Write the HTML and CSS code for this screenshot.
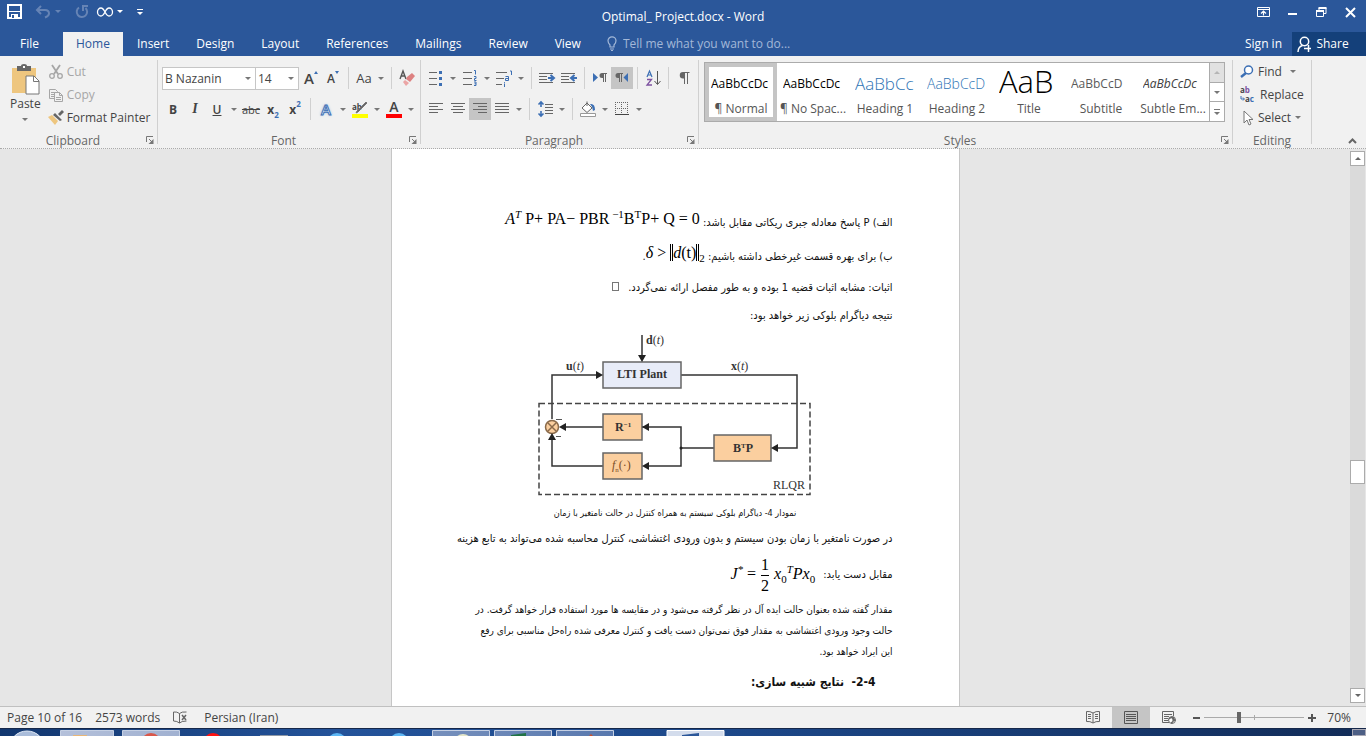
FILE: index.html
```html
<!DOCTYPE html>
<html lang="en">
  <head>
    <meta charset="UTF-8" />
    <meta name="viewport" content="width=device-width, initial-scale=1.0" />
    <title>Optimal_ Project.docx - Word</title>
    <link rel="stylesheet" href="styles.css">
  </head>
  <body>
    <!-- Title bar -->
    <header class="titlebar">
      <div class="quick">
        <button class="quick-btn" aria-label="Save">
          <svg width="15" height="15" viewBox="0 0 15 15"><path d="M1 1h13v13H1z" fill="none" stroke="#fff" stroke-width="2"/><path d="M2 7h11v1H2zM4 10h7v4H4z" fill="#fff"/><path d="M5 11h2v3H5z" fill="#2b579a"/></svg>
        </button>
        <button class="quick-btn undo dim" aria-label="Undo">
          <svg width="15" height="13" viewBox="0 0 15 13"><path d="M5 1 1 5l4 4M1.500 5H9q4 0 4 3.500Q13 11 9 12.500" fill="none" stroke="currentColor" stroke-width="2"/></svg>
          <i class="caret"></i>
        </button>
        <button class="quick-btn dim" aria-label="Repeat">
          <svg width="14" height="14" viewBox="0 0 14 14"><path d="M4 2.500A5.200 5.200 0 1 0 10.500 3M8 6V1h5" fill="none" stroke="currentColor" stroke-width="2"/></svg>
        </button>
        <button class="quick-btn" aria-label="Infinity">
          <svg width="16" height="10" viewBox="0 0 16 10"><path d="M8 5C6 1 5 1 4 1a3.500 4 0 0 0 0 8c2 0 3-2 4-4s2-4 4-4a3.500 4 0 0 1 0 8C10 9 9 7 8 5z" fill="none" stroke="#fff" stroke-width="1.300"/></svg>
          <i class="caret"></i>
        </button>
        <button class="quick-btn more" aria-label="Customize toolbar">
          <i class="bar"></i><i class="caret"></i>
        </button>
      </div>
      <h1 class="doc-title">Optimal_ Project.docx - Word</h1>
      <div class="window-btns">
        <button aria-label="Ribbon display options">
          <svg width="13" height="10" viewBox="0 0 13 10"><path d="M.5.5h12v9H.5zM0 2.500h13" fill="none" stroke="#fff"/><path d="M6.500 8.500V4M4 6.500 6.500 4 9 6.500" fill="none" stroke="#fff" stroke-width="1.200"/></svg>
        </button>
        <button aria-label="Minimize">
          <svg width="10" height="10" viewBox="0 0 10 10"><path d="M0 6h9v2H0z" fill="#fff"/></svg>
        </button>
        <button aria-label="Restore">
          <svg width="11" height="10" viewBox="0 0 11 10"><path d="M.5 4h7v5.500h-7zM3 3.500V1h7v5.500H8" fill="none" stroke="#fff"/><path d="M0 3h8v2H0zM2.500 0h8v2h-8z" fill="#fff"/></svg>
        </button>
        <button aria-label="Close">
          <svg width="11" height="11" viewBox="0 0 11 11"><path d="m1 1 9 9M10 1l-9 9" stroke="#fff" stroke-width="2"/></svg>
        </button>
      </div>
    </header>

    <!-- Ribbon tabs -->
    <nav class="tabs">
      <a class="tab file" href="#">File</a>
      <a class="tab active" href="#">Home</a>
      <a class="tab" href="#">Insert</a>
      <a class="tab" href="#">Design</a>
      <a class="tab" href="#">Layout</a>
      <a class="tab" href="#">References</a>
      <a class="tab" href="#">Mailings</a>
      <a class="tab" href="#">Review</a>
      <a class="tab" href="#">View</a>
      <label class="tell" for="tellMe" aria-label="Tell me">
        <svg width="10" height="15" viewBox="0 0 10 15"><path d="M3 11V9Q1 7 1 4.800a4 4 0 0 1 8 0Q9 7 7 9v2zM3 13h4M4 14.500h2" fill="none" stroke="#a3b8d8" stroke-width="1.200"/></svg>
      </label>
      <input class="tell-input" id="tellMe" type="text" placeholder="Tell me what you want to do..." />
      <a class="signin" href="#">Sign in</a>
      <button class="share">
        <svg width="15" height="17" viewBox="0 0 15 17"><circle cx="7.500" cy="5.500" r="4.200" fill="none" stroke="#fff" stroke-width="1.500"/><path d="M1 16q0-5 4.500-6.500M7 12.500h7M11.500 9v7" fill="none" stroke="#fff" stroke-width="1.500"/></svg>
        Share
      </button>
    </nav>

    <!-- Ribbon -->
    <section class="ribbon">
      <div class="group clipboard">
        <div class="group-body clip-body">
          <button class="paste">
            <svg width="29" height="31" viewBox="0 0 29 31"><path d="M1 4h24v25H1z" fill="#eec67f"/><path d="M6 2h4q0-2 3-2t3 2h4v5H6z" fill="#666"/><path d="M12 2h2v2h-2z" fill="#fff"/><path d="M15 12h8l5 5v13H15z" fill="#fff" stroke="#777"/><path d="M22.500 12v5.500H28" fill="none" stroke="#777"/></svg>
            <span>Paste</span>
            <i class="caret"></i>
          </button>
          <div class="clip-list">
            <button class="cmd off">
              <svg width="16" height="16" viewBox="0 0 16 16"><path d="m4 1 6 9M12 1l-6 9" stroke="#a6a6a6" stroke-width="1.800"/><circle cx="4" cy="12" r="2.300" fill="none" stroke="#a6a6a6" stroke-width="1.300"/><circle cx="12" cy="12" r="2.300" fill="none" stroke="#a6a6a6" stroke-width="1.300"/></svg>
              Cut
            </button>
            <button class="cmd off">
              <svg width="16" height="16" viewBox="0 0 16 16"><path d="M1.500 2.500h6l2 2v7h-8zM3 5.500h4M3 7.500h4M3 9.500h4" fill="none" stroke="#a6a6a6"/><path d="M6.500 5.500h5l3 3v6h-8z" fill="#f1f1f1" stroke="#a6a6a6"/><path d="M11.500 5.500v3h3M8 10.500h5M8 12.500h5" fill="none" stroke="#a6a6a6"/></svg>
              Copy
            </button>
            <button class="cmd">
              <svg width="16" height="16" viewBox="0 0 16 16"><path d="m0 7 4-2 6 6-3 4z" fill="#eec67f"/><path d="m5 5 2-2 7 7-2 1zM10 4l4-4 2 2-4 4z" fill="#666"/></svg>
              Format Painter
            </button>
          </div>
        </div>
        <div class="group-foot"><span>Clipboard</span><button class="launch" aria-label="Clipboard options"><svg width="8" height="8" viewBox="0 0 8 8"><path d="M.5 6V.5H7M3 3l3 3" fill="none" stroke="#777"/><path d="M7.500 3v5h-5z" fill="#777"/></svg></button></div>
      </div>

      <div class="group font">
        <div class="group-body">
          <div class="tool-row">
            <div class="combo">
              <select class="font-name" aria-label="Font"><option>B Nazanin</option></select>
              <i class="caret"></i>
            </div>
            <div class="combo">
              <select class="font-size" aria-label="Font size"><option>14</option></select>
              <i class="caret"></i>
            </div>
            <button class="tool" aria-label="Grow font"><span class="grow">A</span><i class="tri up"></i></button>
            <button class="tool" aria-label="Shrink font"><span class="shrink">A</span><i class="tri down"></i></button>
            <i class="sep"></i>
            <button class="tool case">Aa</button>
            <button class="drop" aria-label="Case options"><i class="caret"></i></button>
            <i class="sep"></i>
            <button class="tool" aria-label="Clear formatting">
              <svg width="16" height="16" viewBox="0 0 16 16"><path d="M1 9 4 1l3 8M2 6h4" fill="none" stroke="#555" stroke-width="1.400"/><path d="m8 7 5-4 3 3-5 6-4-3z" fill="#dd8181"/><path d="m6 10 4 3-3 3-3-4z" fill="#eba5a5"/></svg>
            </button>
          </div>
          <div class="tool-row">
            <button class="tool bold">B</button>
            <button class="tool italic">I</button>
            <button class="tool under">U</button>
            <button class="drop" aria-label="Underline style"><i class="caret"></i></button>
            <button class="tool strike">abc</button>
            <button class="tool script">x<sub>2</sub></button>
            <button class="tool script">x<sup>2</sup></button>
            <i class="sep"></i>
            <button class="tool effect">A</button>
            <button class="drop" aria-label="Text effects"><i class="caret"></i></button>
            <button class="tool swatch mark" aria-label="Highlight">
              <svg width="16" height="12" viewBox="0 0 16 12"><text x="0" y="8" class="mini">ab</text><path d="M15 1 6 10l-2 1 1-2 9-9z" fill="#666" stroke="#777"/></svg>
              <i class="yellow"></i>
            </button>
            <button class="drop" aria-label="Highlight colour"><i class="caret"></i></button>
            <button class="tool swatch"><span>A</span><i class="red"></i></button>
            <button class="drop" aria-label="Font colour"><i class="caret"></i></button>
          </div>
        </div>
        <div class="group-foot"><span>Font</span><button class="launch" aria-label="Font options"><svg width="8" height="8" viewBox="0 0 8 8"><path d="M.5 6V.5H7M3 3l3 3" fill="none" stroke="#777"/><path d="M7.500 3v5h-5z" fill="#777"/></svg></button></div>
      </div>

      <div class="group para">
        <div class="group-body">
          <div class="tool-row">
            <button class="tool" aria-label="Bullets">
              <svg width="16" height="16" viewBox="0 0 16 16"><path d="M1 2.500h8M1 8.500h8M1 14.500h8" stroke="#666"/><path d="M11 1h3v3h-3zM11 7h3v3h-3zM11 13h3v3h-3z" fill="#3c6fb4"/></svg>
            </button>
            <button class="drop" aria-label="Bullet style"><i class="caret"></i></button>
            <button class="tool" aria-label="Numbering">
              <svg width="16" height="16" viewBox="0 0 16 16"><path d="M1 2.500h9M1 8.500h9M1 14.500h9" stroke="#666"/><path d="M12 .5h1.500v4M12 6.500h2v2h-1.500v2h2M12 12h2v3.500h-2M12.500 13.800H14" fill="none" stroke="#3c6fb4"/></svg>
            </button>
            <button class="drop" aria-label="Number style"><i class="caret"></i></button>
            <button class="tool" aria-label="Multilevel list">
              <svg width="17" height="17" viewBox="0 0 17 17"><path d="M0 2.500h11M0 8.500h8M0 14.500h6" stroke="#666"/><path d="M14 1h1.500v4M9.500 6.500h3v4h-3v-2h3M8.500 12v.800M8.500 13.500V17" fill="none" stroke="#3c6fb4"/></svg>
            </button>
            <button class="drop" aria-label="List style"><i class="caret"></i></button>
            <i class="sep"></i>
            <button class="tool" aria-label="Decrease indent">
              <svg width="16" height="12" viewBox="0 0 16 12"><path d="M0 1.500h14M0 4.500h8M0 7.500h8M0 10.500h14" stroke="#666"/><path d="M9 6h5M11.500 3 15 6l-3.500 3" fill="none" stroke="#3c6fb4" stroke-width="2"/></svg>
            </button>
            <button class="tool" aria-label="Increase indent">
              <svg width="16" height="12" viewBox="0 0 16 12"><path d="M0 1.500h14M0 4.500h8M0 7.500h8M0 10.500h14" stroke="#666"/><path d="M16 6h-5M13.500 3 10 6l3.500 3" fill="none" stroke="#3c6fb4" stroke-width="2"/></svg>
            </button>
            <i class="sep"></i>
            <button class="tool" aria-label="Left to right">
              <svg width="14" height="10" viewBox="0 0 14 10"><path d="M0 0v9l5-4.500z" fill="#3c6fb4"/><path d="M9 5a2.500 2.500 0 0 1 0-5h5v1h-1v8h-1V1h-1v8h-1V5z" fill="#666"/></svg>
            </button>
            <button class="tool on" aria-label="Right to left">
              <svg width="14" height="10" viewBox="0 0 14 10"><path d="M13 0v9L8.500 4.500z" fill="#3c6fb4"/><path d="M3 5a2.500 2.500 0 0 1 0-5h5v1H7v8H6V1H5v8H4V5z" fill="#666"/></svg>
            </button>
            <i class="sep"></i>
            <button class="tool" aria-label="Sort">
              <svg width="15" height="16" viewBox="0 0 15 16"><path d="m1 7 2.500-6L6 7M2 5h3" fill="none" stroke="#3c6fb4" stroke-width="1.200"/><path d="M1 9.500h4.500L1 15h5" fill="none" stroke="#7d51a0" stroke-width="1.300"/><path d="M11.500 1v13M8.500 11l3 3.500 3-3.500" fill="none" stroke="#555"/></svg>
            </button>
            <i class="sep"></i>
            <button class="tool" aria-label="Show marks">
              <svg width="11" height="12" viewBox="0 0 11 12"><path d="M4 6.500a3.200 3.200 0 0 1 0-6.500h6.500v1H9v11H8V1H6v11H5V6.500z" fill="#666"/></svg>
            </button>
          </div>
          <div class="tool-row">
            <button class="tool" aria-label="Align left">
              <svg width="14" height="12" viewBox="0 0 14 12"><path d="M0 .5h14M0 3.500h9M0 6.500h14M0 9.500h9" stroke="#666"/></svg>
            </button>
            <button class="tool" aria-label="Center">
              <svg width="14" height="12" viewBox="0 0 14 12"><path d="M0 .5h14M2 3.500h10M0 6.500h14M2 9.500h10" stroke="#666"/></svg>
            </button>
            <button class="tool on" aria-label="Align right">
              <svg width="14" height="12" viewBox="0 0 14 12"><path d="M0 .5h14M5 3.500h9M0 6.500h14M5 9.500h9" stroke="#666"/></svg>
            </button>
            <button class="tool" aria-label="Justify">
              <svg width="14" height="12" viewBox="0 0 14 12"><path d="M0 .5h14M0 3.500h14M0 6.500h14M0 9.500h14" stroke="#666"/></svg>
            </button>
            <button class="drop" aria-label="Justify options"><i class="caret"></i></button>
            <i class="sep"></i>
            <button class="tool" aria-label="Line spacing">
              <svg width="15" height="16" viewBox="0 0 15 16"><path d="M7 3.500h8M7 6.500h8M7 9.500h8M7 12.500h8" stroke="#666"/><path d="M3 1v5M.5 3.500 3 1l2.500 2.500M3 15v-5M.5 12.500 3 15l2.500-2.500" fill="none" stroke="#3c6fb4" stroke-width="1.600"/></svg>
            </button>
            <button class="drop" aria-label="Spacing options"><i class="caret"></i></button>
            <i class="sep"></i>
            <button class="tool" aria-label="Shading">
              <svg width="16" height="16" viewBox="0 0 16 16"><path d="m2 7 5-5 5 5-5 4.500z" fill="#fff" stroke="#666"/><path d="M7 5V.5" stroke="#666"/><path d="M10 3q5-1 5 6l-2 1q0-4-3-7z" fill="#3c6fb4"/><path d="M.5 12.500h15v3H.5z" fill="#fff" stroke="#999"/></svg>
            </button>
            <button class="drop" aria-label="Shading colour"><i class="caret"></i></button>
            <button class="tool" aria-label="Borders">
              <svg width="14" height="14" viewBox="0 0 14 14"><path d="M0 .5h14M0 6.500h14M.5 0v14M6.500 0v14M12.500 0v14" stroke="#666" stroke-dasharray="1 1"/><path d="M0 12.500h14" stroke="#444"/></svg>
            </button>
            <button class="drop" aria-label="Border options"><i class="caret"></i></button>
          </div>
        </div>
        <div class="group-foot"><span>Paragraph</span><button class="launch" aria-label="Paragraph options"><svg width="8" height="8" viewBox="0 0 8 8"><path d="M.5 6V.5H7M3 3l3 3" fill="none" stroke="#777"/><path d="M7.500 3v5h-5z" fill="#777"/></svg></button></div>
      </div>

      <div class="group styles">
        <div class="gallery">
          <button class="style chosen"><span class="sample">AaBbCcDc</span><span>¶ Normal</span></button>
          <button class="style"><span class="sample">AaBbCcDc</span><span>¶ No Spac...</span></button>
          <button class="style"><span class="sample h1">AaBbCc</span><span>Heading 1</span></button>
          <button class="style"><span class="sample h2">AaBbCcD</span><span>Heading 2</span></button>
          <button class="style"><span class="sample title">AaB</span><span>Title</span></button>
          <button class="style"><span class="sample subtitle">AaBbCcD</span><span>Subtitle</span></button>
          <button class="style"><span class="sample subtle">AaBbCcDc</span><span>Subtle Em...</span></button>
          <div class="gallery-nav">
            <button class="nav-off" aria-label="Previous styles"><i class="caret flip"></i></button>
            <button aria-label="Next styles"><i class="caret"></i></button>
            <button aria-label="All styles"><i class="bar"></i><i class="caret"></i></button>
          </div>
        </div>
        <div class="group-foot"><span>Styles</span><button class="launch" aria-label="Styles options"><svg width="8" height="8" viewBox="0 0 8 8"><path d="M.5 6V.5H7M3 3l3 3" fill="none" stroke="#777"/><path d="M7.500 3v5h-5z" fill="#777"/></svg></button></div>
      </div>

      <div class="group editing">
        <div class="group-body edit-body">
          <button class="cmd">
            <svg width="14" height="14" viewBox="0 0 14 14"><circle cx="8.500" cy="5" r="4" fill="#fff" stroke="#3c6fb4" stroke-width="1.500"/><path d="m6 8-5 4" stroke="#3c6fb4" stroke-width="2.500"/></svg>
            Find <i class="caret gap"></i>
          </button>
          <button class="cmd">
            <svg width="16" height="16" viewBox="0 0 16 16"><text x="0" y="6" class="mini">a<tspan fill="#7d51a0">b</tspan></text><text x="5" y="15" class="mini">a<tspan fill="#3c6fb4">c</tspan></text><path d="M1 9v3h3M3 10.500 4.500 12 3 13.500" fill="none" stroke="#3c6fb4"/></svg>
            Replace
          </button>
          <button class="cmd">
            <svg width="14" height="16" viewBox="0 0 14 16"><path d="M4 1v12l3-3 2 5 2-1-2-4.500h4z" fill="#fff" stroke="#777"/></svg>
            Select<i class="caret"></i>
          </button>
        </div>
        <div class="group-foot"><span>Editing</span></div>
      </div>
      <button class="collapse" aria-label="Collapse ribbon">
        <svg width="9" height="6" viewBox="0 0 9 6"><path d="m1 5 3.500-3.500L8 5" fill="none" stroke="#666" stroke-width="2"/></svg>
      </button>
    </section>

    <!-- Document -->
    <main class="workspace">
      <div class="canvas">
        <article class="page" lang="fa" dir="rtl">
          <p class="line tall">الف) P پاسخ معادله جبری ریکاتی مقابل باشد: <span class="math" dir="ltr"><i>A<sup>T</sup></i> P+ PA− PBR<sup> −1</sup>B<sup>T</sup>P+ Q = 0</span></p>
          <p class="line tall">ب) برای بهره قسمت غیرخطی داشته باشیم: <span class="math" dir="ltr"><i>δ</i> &gt; <span class="norm"><i>d</i>(t)</span><sub>2</sub></span>.</p>
          <p class="line">اثبات: مشابه اثبات قضیه 1 بوده و به طور مفصل ارائه نمی‌گردد. <span class="qed"></span></p>
          <p class="line">نتیجه دیاگرام بلوکی زیر خواهد بود:</p>
          <figure class="figure" dir="ltr">
            <svg class="diagram" viewBox="538 332 276 166" role="img" aria-label="Block diagram">
              <g fill="none" stroke="#333" stroke-width="1.500">
                <path d="M643 335v22M682 375h116v73h-20M715 448h-33M640 427h42v39h-34M648 427h-5M604 427h-38M604 466h-51v-28M553 419v-44h46"/>
                <path d="M540 403.500h271v91H540z" stroke="#444" stroke-dasharray="6 3"/>
              </g>
              <g stroke="#666" stroke-width="1.500">
                <path d="M604 362h78v26h-78z" fill="#e8ecf8"/>
                <path d="M604 414h39v26h-39zM604 453h39v26h-39zM715 435h57v26h-57z" fill="#fbcf9f"/>
                <circle cx="553" cy="427" r="6.500" fill="#fbcf9f" stroke="#8a6a4a"/>
                <path d="m549 423 8 8M557 423l-8 8" stroke="#8a6a4a"/>
              </g>
              <g fill="#222">
                <path d="m639 355 4 7 4-7zM597 371l7 4-7 4zM779 444l-7 4 7 4zM650 423l-7 4 7 4zM650 462l-7 4 7 4zM567 423l-7 4 7 4zM549 440l4-7 4 7z"/>
                <circle cx="682" cy="448" r="1.500"/>
              </g>
              <path d="M557 419.500h6M557 436.500h5" stroke="#555"/>
              <g class="dia-text">
                <text x="647" y="344"><tspan class="b">d</tspan>(<tspan class="it">t</tspan>)</text>
                <text x="567" y="370"><tspan class="b">u</tspan>(<tspan class="it">t</tspan>)</text>
                <text x="732" y="370"><tspan class="b">x</tspan>(<tspan class="it">t</tspan>)</text>
                <text x="643" y="378" text-anchor="middle" class="b">LTI Plant</text>
                <text x="616" y="431" class="b">R<tspan class="tiny" dy="-4">−1</tspan></text>
                <text x="613" y="469" class="brown"><tspan class="it">f</tspan><tspan class="tiny" dy="3">n</tspan><tspan dy="-3">(·)</tspan></text>
                <text x="734" y="452" class="b">B<tspan class="tiny" dy="-4">T</tspan><tspan dy="4">P</tspan></text>
                <text x="774" y="489">RLQR</text>
              </g>
            </svg>
            <figcaption class="caption" dir="rtl">نمودار 4- دیاگرام بلوکی سیستم به همراه کنترل در حالت نامتغیر با زمان</figcaption>
          </figure>
          <p class="line">در صورت نامتغیر با زمان بودن سیستم و بدون ورودی اغتشاشی، کنترل محاسبه شده می‌تواند به تابع هزینه</p>
          <p class="line cost"><span>مقابل دست یابد:</span> <span class="math" dir="ltr"><i>J<sup>*</sup></i> = <span class="frac"><span>1</span><span>2</span></span> <i>x</i><sub>0</sub><sup><i>T</i></sup><i>Px</i><sub>0</sub></span></p>
          <p class="body-text">مقدار گفته شده بعنوان حالت ایده آل در نظر گرفته می‌شود و در مقایسه ها مورد استفاده قرار خواهد گرفت. در<br>حالت وجود ورودی اغتشاشی به مقدار فوق نمی‌توان دست یافت و کنترل معرفی شده راه‌حل مناسبی برای رفع<br>این ایراد خواهد بود.</p>
          <h2 class="heading">2-4-&nbsp; نتایج شبیه سازی:</h2>
        </article>
      </div>
      <div class="scroll">
        <button class="scroll-btn" aria-label="Scroll up"><i class="caret flip"></i></button>
        <div class="track"><i class="before"></i><i class="thumb"></i><i class="after"></i></div>
        <button class="scroll-btn" aria-label="Scroll down"><i class="caret"></i></button>
      </div>
    </main>

    <!-- Status bar -->
    <footer class="status">
      <span>Page 10 of 16</span>
      <span>2573 words</span>
      <button class="proof" aria-label="Proofing">
        <svg width="15" height="13" viewBox="0 0 15 13"><path d="M6.500 2.500Q4 .5.500 1v9q3.500 0 6 2 2-2 7-2M6.500 2.500V12M6.500 2.500q2-2 7-1.500" fill="none" stroke="#666"/><path d="m9 4 4 5M13 4 9 9" stroke="#666" stroke-width="1.500"/></svg>
      </button>
      <span>Persian (Iran)</span>
      <div class="views">
        <button aria-label="Read mode"><svg width="14" height="13" viewBox="0 0 14 13"><path d="M7 2Q4 0 .5.500v10Q4 10 7 12q3-2 6.500-1.500V.5Q10 0 7 2v10M2 3.500h3M2 5.500h3M2 7.500h3M9 3.500h3M9 5.500h3M9 7.500h3" fill="none" stroke="#666"/></svg></button>
        <button class="on" aria-label="Print layout"><svg width="14" height="13" viewBox="0 0 14 13"><path d="M.5.5h13v12H.5zM2 3.500h10M2 5.500h10M2 7.500h10M2 9.500h10" fill="none" stroke="#555"/></svg></button>
        <button aria-label="Web layout"><svg width="14" height="13" viewBox="0 0 14 13"><path d="M7 11.500H.5V.5h11V5M2 3.500h8M2 5.500h5M2 7.500h4M2 9.500h4" fill="none" stroke="#666"/><circle cx="10" cy="9" r="3.500" fill="#fff" stroke="#666"/><path d="M7 8q3-3 4 0t-2 4M11 6l2 4" fill="none" stroke="#666" stroke-width="1.500"/></svg></button>
      </div>
      <div class="zoom">
        <button aria-label="Zoom out"><svg width="7" height="7" viewBox="0 0 7 7"><path d="M0 3h7v2H0z" fill="#555"/></svg></button>
        <input class="slider" type="range" min="0" max="100" value="34" aria-label="Zoom" />
        <button aria-label="Zoom in"><svg width="8" height="8" viewBox="0 0 8 8"><path d="M0 3h8v2H0zM3 0h2v8H3z" fill="#555"/></svg></button>
        <span class="percent">70%</span>
      </div>
    </footer>

    <!-- Top edge of the desktop taskbar -->
    <div class="taskbar">
      <svg class="icons" width="740" height="8" viewBox="0 0 740 8">
        <defs><linearGradient id="btn"><stop offset="0" stop-color="#b4c0da"/><stop offset="1" stop-color="#5878ae"/></linearGradient></defs>
        <circle cx="27" cy="20" r="18" fill="#a9bcda" stroke="#dfe8f5"/>
        <g fill="url(#btn)" stroke="#c5d0e4">
          <path d="M60.500 9V1.500h53V9zM122.500 9V1.500h57V9zM432.500 9V1.500h57V9zM494.500 9V1.500h57V9zM556.500 9V1.500h57V9z"/>
        </g>
        <path d="M667 9V1.500h57V9z" fill="#d3dcec" stroke="#fff"/>
        <path d="M73 8V6h14v2z" fill="#e9b676"/>
        <circle cx="151" cy="14" r="10" fill="#d9574a"/>
        <circle cx="213" cy="14" r="10" fill="#f11"/>
        <path d="M260 6h28v2h-28z" fill="#8f98a5"/>
        <circle cx="337" cy="14" r="10" fill="#5cb6f4"/>
        <circle cx="399" cy="14" r="10" fill="#5cb6f4"/>
        <circle cx="463" cy="14" r="9" fill="#e4e6c8"/>
        <path d="m511 6 15-2v4h-15z" fill="#217346"/>
        <path d="m588 8 3-3 3 3z" fill="#c8502d"/>
        <path d="m682 6 17-2v4h-17z" fill="#2b579a"/>
      </svg>
      <button class="show-desktop" aria-label="Show desktop"></button>
    </div>
  </body>
</html>
```
FILE: styles.css
```css
:root {
  --blue: #2b579a;
  --dark-blue: #14407a;
  --ribbon: #f1f1f1;
  --text: #444;
  --muted: #666;
  --line: #d0d0d0;
  --on: #c5c5c5;
  --accent: #3c6fb4;
}

* {
  box-sizing: border-box;
}

body {
  margin: 0;
  height: 100vh;
  display: flex;
  flex-direction: column;
  overflow: hidden;
  font-family: "Open Sans", "Noto Sans", sans-serif;
  font-size: 12px;
  color: var(--text);
  background: #e6e6e6;
}

button {
  font: inherit;
  color: inherit;
  background: none;
  border: none;
  padding: 0;
  display: flex;
  align-items: center;
  justify-content: center;
}

a {
  color: inherit;
  text-decoration: none;
}

svg {
  display: block;
  flex: none;
  overflow: visible;
}

.caret {
  flex: none;
  width: 0;
  height: 0;
  border: 3px solid transparent;
  border-top-color: currentColor;
  border-bottom: 0;
}

.flip {
  transform: rotate(180deg);
}

/* Title bar */
.titlebar {
  flex: none;
  display: grid;
  grid-template-columns: 1fr auto 1fr;
  height: 32px;
  background: var(--blue);
  color: #fff;
}

.quick {
  display: flex;
  align-items: center;
  gap: 8px;
  padding: 0 0 11px 7px;
}

.quick-btn {
  gap: 4px;
}

.undo {
  margin: 0 6px;
}

.dim {
  color: #6684b5;
}

.more {
  flex-direction: column;
  gap: 2px;
  margin-left: 6px;
}

.bar {
  width: 6px;
  height: 1px;
  background: currentColor;
}

.doc-title {
  margin: 0;
  font-size: 12px;
  font-weight: normal;
  line-height: 34px;
}

.window-btns {
  display: flex;
  justify-content: flex-end;
  align-items: center;
  gap: 18px;
  padding: 0 10px 10px 0;
}

/* Tabs */
.tabs {
  flex: none;
  display: flex;
  align-items: stretch;
  gap: 1px;
  height: 24px;
  line-height: 24px;
  background: var(--blue);
  color: #fff;
}

.tab {
  padding: 0 13px;
}

.file {
  padding: 0 23px 0 20px;
}

.active {
  background: var(--ribbon);
  color: var(--blue);
}

.tell {
  display: flex;
  align-items: center;
  padding: 0 5px 2px 12px;
}

.tell-input {
  flex: 1;
  min-width: 0;
  padding: 0;
  border: none;
  background: none;
  font: inherit;
  color: #fff;
}

.tell-input::placeholder {
  color: #a3b8d8;
  opacity: 1;
}

.signin {
  padding: 0 9px;
}

.share {
  gap: 4px;
  width: 74px;
  padding-right: 12px;
  background: var(--dark-blue);
}

/* Ribbon */
.ribbon {
  flex: none;
  display: flex;
  height: 93px;
  padding-top: 4px;
  background: var(--ribbon);
  border-bottom: 1px dotted #aaa;
}

.group {
  flex: none;
  display: flex;
  flex-direction: column;
  justify-content: space-between;
  height: 84px;
  border-right: 1px solid var(--line);
}

.group-foot {
  display: flex;
  align-items: center;
  height: 8px;
  color: var(--muted);
}

.group-foot span {
  flex: 1;
  text-align: center;
}

.launch {
  margin-right: 3px;
}

.clipboard {
  width: 158px;
}

.font {
  width: 263px;
}

.para {
  width: 278px;
}

.editing {
  width: 79px;
}

.styles {
  flex: 1;
  min-width: 0;
}

.clip-body {
  display: flex;
  gap: 7px;
  padding-left: 10px;
}

.paste {
  flex-direction: column;
  justify-content: flex-start;
  padding-top: 4px;
}

.paste span {
  line-height: 18px;
}

.paste .caret {
  margin-top: 5px;
}

.cmd {
  justify-content: flex-start;
  gap: 4px;
  height: 23px;
  white-space: nowrap;
}

.off {
  color: #a6a6a6;
}

.clip-list .cmd {
  gap: 3px;
}

.edit-body {
  padding-left: 7px;
}

.gap {
  margin-left: 4px;
}

.drop,
.combo .caret,
.cmd .caret,
.paste .caret,
.gallery-nav {
  color: #777;
}

.mini {
  font-size: 8px;
  font-weight: bold;
  fill: #444;
}

.tool-row {
  display: flex;
  align-items: center;
  height: 22px;
  margin: 7px 0 9px 4px;
}

.combo {
  display: flex;
  align-items: center;
  background: #fff;
  border: 1px solid #c6c6c6;
  height: 23px;
  padding-right: 4px;
}

.combo + .combo {
  border-left: none;
  margin-right: 1px;
}

.combo select {
  appearance: none;
  border: none;
  background: none;
  padding: 0 2px;
  font: inherit;
  color: inherit;
}

.font-name {
  width: 82px;
}

.font-size {
  width: 32px;
}

.tool {
  width: 22px;
  height: 22px;
  flex: none;
}

.on {
  background: var(--on);
}

.drop {
  width: 12px;
  height: 22px;
  flex: none;
}

.sep {
  flex: none;
  width: 1px;
  height: 22px;
  margin: 0 4px;
  background: var(--line);
}

.grow {
  font-size: 15px;
  font-weight: 600;
}

.shrink {
  font-size: 12px;
  font-weight: 600;
}

.tri {
  align-self: flex-start;
  margin-top: 4px;
  border: 2px solid transparent;
}

.up {
  border-bottom: 3px solid var(--accent);
  border-top: 0;
}

.down {
  border-top: 3px solid var(--accent);
  border-bottom: 0;
}

.case {
  font-size: 13px;
}

.bold {
  font-weight: bold;
}

.italic {
  font-family: "Liberation Serif", serif;
  font-size: 14px;
  font-style: italic;
  font-weight: bold;
}

.under {
  font-weight: 600;
  text-decoration: underline;
}

.strike {
  font-size: 11px;
  text-decoration: line-through;
}

.script {
  font-weight: bold;
}

.script sub,
.script sup {
  font-size: 8px;
  color: var(--accent);
}

.script sub {
  align-self: flex-end;
}

.script sup {
  align-self: flex-start;
}

.effect {
  font-size: 15px;
  font-weight: 600;
  color: #fff;
  -webkit-text-stroke: 1px var(--accent);
  text-shadow: 0 0 3px #7ea6d8;
}

.swatch {
  flex-direction: column;
  justify-content: flex-end;
  padding-bottom: 2px;
  font-size: 14px;
  font-weight: 600;
  line-height: 14px;
}

.swatch i {
  width: 16px;
  height: 4px;
}

.yellow {
  background: #ff0;
}

.red {
  background: #f00;
}

/* Styles gallery */
.gallery {
  display: flex;
  align-self: flex-start;
  height: 60px;
  margin: 2px 5px 0;
  background: #fff;
  border: 1px solid #ababab;
}

.style {
  flex-direction: column;
  justify-content: flex-end;
  width: 72px;
  padding: 0 5px;
  border: 4px solid #fff;
  border-width: 4px 1px;
  line-height: 16px;
  color: #555;
  white-space: nowrap;
}

.chosen {
  border: 4px solid var(--on);
  padding: 0 2px;
}

.sample {
  display: flex;
  align-items: center;
  width: 60px;
  height: 34px;
  overflow: hidden;
  color: #000;
}

.h1 {
  font-size: 17px;
  font-weight: 300;
  color: #2e74b5;
}

.h2 {
  font-size: 14px;
  font-weight: 300;
  color: #2e74b5;
}

.title {
  padding-bottom: 6px;
  font-size: 31px;
  font-weight: 300;
}

.subtitle {
  color: #5a5a5a;
}

.subtle {
  font-style: italic;
  color: #404040;
}

.gallery-nav {
  display: flex;
  flex-direction: column;
  width: 15px;
  border-left: 1px solid #ababab;
}

.gallery-nav button {
  flex: 1;
  flex-direction: column;
  gap: 2px;
}

.gallery-nav button + button {
  border-top: 1px solid #ababab;
}

.nav-off {
  background: #e1e1e1;
  color: #b5b5b5;
}

.collapse {
  width: 54px;
  padding: 0 0 4px 26px;
  align-items: flex-end;
}

/* Document */
.workspace {
  flex: 1;
  min-height: 0;
  display: flex;
}

.canvas {
  flex: 1;
  display: flex;
  justify-content: center;
  overflow: hidden;
}

.page {
  width: 569px;
  padding: 57px 66px 0;
  background: #fff;
  border: 1px solid #c6c6c6;
  border-width: 0 1px;
  font-family: "DejaVu Sans Condensed", "DejaVu Sans", sans-serif;
  font-size: 11px;
  color: #111;
  white-space: nowrap;
}

.line {
  margin: 0;
  height: 28px;
  line-height: 28px;
}

.tall {
  height: 34px;
  line-height: 34px;
}

.math {
  font-family: "Liberation Serif", serif;
  font-size: 16px;
  line-height: 20px;
  color: #000;
  vertical-align: 2px;
}

.math sup,
.math sub {
  font-size: 11px;
  line-height: 0;
}

.norm {
  border: 3px double #000;
  border-width: 0 3px;
}

.qed {
  display: inline-block;
  width: 7px;
  height: 9px;
  margin-right: 6px;
  border: 1px solid #777;
}

.figure {
  margin: 2px 0 0;
  display: flex;
  flex-direction: column;
  align-items: center;
  gap: 3px;
}

.diagram {
  width: 276px;
  height: 166px;
}

.dia-text {
  font-family: "Liberation Serif", serif;
  font-size: 12px;
  fill: #333;
}

.b {
  font-weight: bold;
}

.it {
  font-style: italic;
}

.tiny {
  font-size: 7px;
}

.brown {
  fill: #7a4a25;
}

.caption {
  font-size: 9px;
  line-height: 24px;
}

.cost {
  display: flex;
  align-items: center;
  gap: 8px;
  height: 44px;
}

.frac {
  display: inline-flex;
  flex-direction: column;
  margin: 0 1px;
  vertical-align: middle;
}

.frac span + span {
  border-top: 1px solid #000;
}

.body-text {
  margin: 2px 0 0;
  font-size: 10px;
  line-height: 21px;
}

.heading {
  margin: 8px 17px 0 0;
  font-size: 12px;
  line-height: 24px;
}

/* Scroll bar */
.scroll {
  flex: none;
  display: flex;
  flex-direction: column;
  width: 16px;
  padding: 2px 1px 3px 0;
}

.scroll-btn {
  height: 15px;
  background: #fff;
  border: 1px solid #ababab;
  color: #666;
}

.track {
  flex: 1;
  display: flex;
  flex-direction: column;
  background: #dadada;
}

.before {
  flex: 296;
}

.thumb {
  height: 24px;
  background: #fff;
  border: 1px solid #ababab;
}

.after {
  flex: 205;
}

/* Status bar */
.status {
  flex: none;
  display: flex;
  align-items: center;
  height: 22px;
  padding-left: 7px;
  background: var(--ribbon);
  border-top: 1px solid #c0c0c0;
}

.status > span {
  margin-right: 13px;
}

.proof {
  margin-right: 16px;
}

.views {
  display: flex;
  align-self: stretch;
  margin-left: auto;
}

.views button {
  width: 38px;
}

.zoom {
  display: flex;
  align-items: center;
  gap: 4px;
  padding: 0 15px 0 5px;
}

.slider {
  appearance: none;
  width: 100px;
  height: 12px;
  margin: 0;
  background: linear-gradient(#aaa, #aaa) center / 100% 1px no-repeat,
    linear-gradient(#aaa, #aaa) center / 1px 5px no-repeat;
}

.slider::-webkit-slider-thumb {
  appearance: none;
  width: 4px;
  height: 11px;
  background: #666;
}

.percent {
  margin-left: 7px;
}

/* Taskbar */
.taskbar {
  flex: none;
  display: flex;
  justify-content: space-between;
  height: 8px;
  background: linear-gradient(to right, #12376f, #24539a 25%, #1c4788 55%, #122c58);
  border-top: 1px solid #16284a;
  overflow: hidden;
}

.show-desktop {
  width: 14px;
  background: #4d5f85;
  border: 1px solid #a9a9b5;
}
```
